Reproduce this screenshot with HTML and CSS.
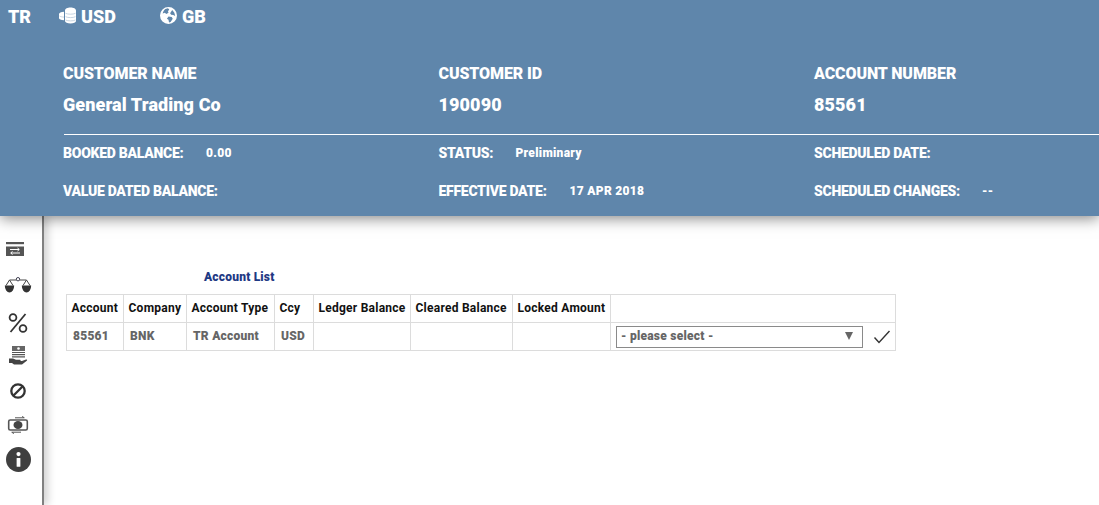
FILE: index.html
```html
<!DOCTYPE html>
<html lang="en">
<head>
<meta charset="utf-8">
<title>Account List</title>
<link rel="stylesheet" href="styles.css">
</head>
<body>
<header class="header">
  <div class="topbar">
    <span class="top-item top-lang">TR</span>
    <span class="top-item top-ccy">
      <svg class="top-icon" viewBox="0 0 17 16"><path fill="#fff" d="M6 3c0-1.700 2.500-3 5.500-3S17 1.300 17 3v10.500c0 1.500-2.500 2.500-5.500 2.500S6 15 6 13.500zM0 6.500C0 5.200 2 4.300 5 4.200v8.600c-3-.1-5-1-5-2.300z"/><path d="M6.500 5.800c2.500 1.200 7.500 1.200 10 0M6.500 9.200c2.500 1.200 7.500 1.200 10 0M6.500 12.500c2.500 1.200 7.500 1.200 10 0M.5 8.500c1 .7 2.700 1 4.500 1.100" fill="none" stroke="#b9cadb" stroke-width=".8"/></svg>
      USD
    </span>
    <span class="top-item top-country">
      <svg class="top-icon" viewBox="0 0 16 16"><path fill="#fff" fill-rule="evenodd" d="M8 0a8 8 0 1 0 0 16A8 8 0 0 0 8 0zM5 1.800l2.500-.6 1.200 1.100L7.500 4l.5 1.500-2 1-1.500-1L2.500 6C3 4 4 2.800 5 1.800zm6.500 1 2 2.500.8 3.200-1.800-1-2-.2-1-1.500zM8 9l3 .5 1 1.500-2 3-1.500.5-.5-2.500L6.500 11z"/></svg>
      GB
    </span>
  </div>
  <div class="primary">
    <div class="field">
      <div class="label">CUSTOMER NAME</div>
      <div class="value">General Trading Co</div>
    </div>
    <div class="field">
      <div class="label">CUSTOMER ID</div>
      <div class="value">190090</div>
    </div>
    <div class="field">
      <div class="label">ACCOUNT NUMBER</div>
      <div class="value">85561</div>
    </div>
  </div>
  <div class="secondary">
    <div class="pair"><span class="pair-label pl-booked">BOOKED BALANCE:</span><span class="pair-value">0.00</span></div>
    <div class="pair"><span class="pair-label pl-status">STATUS:</span><span class="pair-value">Preliminary</span></div>
    <div class="pair"><span class="pair-label">SCHEDULED DATE:</span></div>
    <div class="pair"><span class="pair-label">VALUE DATED BALANCE:</span></div>
    <div class="pair"><span class="pair-label pl-effective">EFFECTIVE DATE:</span><span class="pair-value">17 APR 2018</span></div>
    <div class="pair"><span class="pair-label pl-changes">SCHEDULED CHANGES:</span><span class="pair-value">--</span></div>
  </div>
</header>
<div class="body">
  <nav class="sidebar">
    <svg class="nav-icon ni-transfer" viewBox="0 0 20 16"><rect x="1" y="1" width="18" height="2.200" fill="#555"/><rect x="1" y="5.500" width="18" height="9.500" fill="#555"/><path d="M5 8.500h9M12.500 7l1.800 1.500-1.800 1.500M15 12H6M7.500 10.500 5.700 12l1.800 1.500" fill="none" stroke="#fff" stroke-width="1"/></svg>
    <svg class="nav-icon ni-scale" viewBox="0 0 28 16"><circle cx="14" cy="2.200" r="1.700" fill="none" stroke="#445" stroke-width="1"/><path d="M5.500 3h7M15.500 3h7M5.500 3 2 8.500M5.500 3 9 8.500M22.500 3 19 8.500M22.500 3 26 8.500" fill="none" stroke="#444" stroke-width="1"/><path d="M.8 8.500h9.400a4.700 7 0 0 1-9.400 0zM17.800 8.500h9.400a4.700 7 0 0 1-9.400 0z" fill="#333"/></svg>
    <svg class="nav-icon ni-percent" viewBox="0 0 22 22"><path d="M18.500 2 3.500 20" stroke="#333" stroke-width="1.800" fill="none"/><circle cx="6" cy="5.500" r="3.400" fill="none" stroke="#333" stroke-width="1.800"/><circle cx="16" cy="16.500" r="3.400" fill="none" stroke="#333" stroke-width="1.800"/></svg>
    <svg class="nav-icon ni-cash" viewBox="0 0 20 20"><rect x="4" y="1" width="13" height="5" fill="#666"/><circle cx="10.500" cy="3.500" r="1.300" fill="#fff"/><path d="M4 7.500h13M4 9.700h13M4 11.900h13" stroke="#555" stroke-width="1.200"/><path d="M1 13.500h4l3 1.200h4c1 0 1 1.300 0 1.300H9h5l4-1.500c1 0 1.500.5.800 1.200L14 19.500H6l-2-1.500H1z" fill="#444"/></svg>
    <svg class="nav-icon ni-block" viewBox="0 0 18 18"><circle cx="9" cy="9" r="6.700" fill="none" stroke="#333" stroke-width="2.300"/><path d="M4.500 13.500l9-9" stroke="#333" stroke-width="2.300"/></svg>
    <svg class="nav-icon ni-exchange" viewBox="0 0 22 18"><rect x="1.700" y="4" width="18.600" height="10" rx="1.500" fill="none" stroke="#555" stroke-width="1.600"/><ellipse cx="11" cy="9" rx="4.500" ry="4" fill="#444"/><path d="M8 1.800h9M15 .5l2.500 1.300M14 16.200H5M7 17.500l-2.500-1.300" stroke="#555" fill="none"/></svg>
    <svg class="nav-icon ni-info" viewBox="0 0 24 24"><circle cx="12" cy="12" r="12" fill="#3f3f3f"/><circle cx="12" cy="6.800" r="2" fill="#fff"/><rect x="10.200" y="10.500" width="3.600" height="8.500" rx=".6" fill="#fff"/></svg>
  </nav>
  <main class="content">
    <div class="title">Account List</div>
    <table class="grid">
      <thead>
        <tr>
          <th class="c1">Account</th>
          <th class="c2">Company</th>
          <th class="c3">Account Type</th>
          <th class="c4">Ccy</th>
          <th class="c5">Ledger Balance</th>
          <th class="c6">Cleared Balance</th>
          <th class="c7">Locked Amount</th>
          <th class="c8"></th>
        </tr>
      </thead>
      <tbody>
        <tr>
          <td>85561</td>
          <td>BNK</td>
          <td>TR Account</td>
          <td>USD</td>
          <td></td>
          <td></td>
          <td></td>
          <td class="action-cell">
            <div class="action">
              <div class="select"><span>- please select -</span><span class="arrow"></span></div>
              <svg class="check" viewBox="0 0 18 14"><path d="M1.500 7.500 6 12.500 16.500 1" fill="none" stroke="#333" stroke-width="1.400"/></svg>
            </div>
          </td>
        </tr>
      </tbody>
    </table>
  </main>
</div>
</body>
</html>
```
FILE: styles.css
```css
* { box-sizing: border-box; }
html, body { margin: 0; height: 100%; }
body {
  font-family: Roboto, "Liberation Sans", sans-serif;
  font-weight: 900;
  background: #fff;
  overflow: hidden;
  height: 505px;
}
.header {
  position: relative;
  z-index: 2;
  height: 216px;
  background: #5f86ab;
  color: #fff;
  box-shadow: 0 2px 14px rgba(0, 0, 0, .5);
}
.topbar {
  display: flex;
  align-items: center;
  height: 33px;
  font-size: 18px;
  padding-left: 8px;
}
.top-item { display: flex; align-items: center; }
.top-lang { width: 51px; }
.top-ccy { width: 101px; }
.top-icon { width: 17px; height: 17px; margin-right: 5px; margin-top: -3px; }
.primary {
  display: grid;
  grid-template-columns: 375.5px 375.5px 1fr;
  padding: 31px 0 0 63px;
  height: 101px;
}
.label {
  font-size: 16px;
  line-height: 20px;
  letter-spacing: -.1px;
}
.value {
  font-size: 18px;
  line-height: 20px;
  letter-spacing: .1px;
  margin-top: 11px;
}
.secondary {
  display: grid;
  grid-template-columns: 375.5px 375.5px 1fr;
  grid-auto-rows: 38px;
  padding: 0 0 0 63px;
  background: linear-gradient(#fff, #fff) 64px 0 / 100% 1px no-repeat;
}
.pair {
  display: flex;
  align-items: center;
  height: 38px;
}
.pair-label {
  font-size: 14px;
  letter-spacing: -.27px;
}
.pl-booked { width: 143px; }
.pl-status { width: 77px; }
.pl-effective { width: 131px; }
.pl-changes { width: 168px; }
.pair-value { font-size: 12px; letter-spacing: .3px; }
.body { display: flex; height: 289px; }
.sidebar {
  width: 44px;
  flex: none;
  border-right: 2px solid #808080;
  box-shadow: 4px 0 8px rgba(0, 0, 0, .18);
  display: flex;
  flex-direction: column;
  align-items: center;
  padding: 25px 6px 0 0;
}
.nav-icon { display: block; flex: none; }
.ni-transfer { width: 20px; height: 16px; margin-right: 6px; }
.ni-scale { width: 28px; height: 16px; margin-top: 20px; }
.ni-percent { width: 22px; height: 22px; margin-top: 19px; }
.ni-cash { width: 20px; height: 20px; margin-top: 11px; }
.ni-block { width: 18px; height: 18px; margin-top: 17px; }
.ni-exchange { width: 22px; height: 18px; margin-top: 16px; }
.ni-info { width: 25px; height: 25px; margin-top: 13px; }
.content { flex: 1; padding: 53px 0 0 22px; }
.title {
  font-size: 12px;
  line-height: 16px;
  color: #1f3a84;
  padding-left: 138px;
  letter-spacing: .2px;
}
.grid {
  border-collapse: collapse;
  table-layout: fixed;
  width: 830px;
  margin-top: 9px;
  font-size: 12px;
  letter-spacing: .25px;
}
.grid th, .grid td {
  border: 1px solid #dcdcdc;
  height: 28px;
  padding: 0 0 2px 4.500px;
  text-align: left;
  white-space: nowrap;
  overflow: hidden;
}
.grid th { color: #111; }
.grid td { color: #666; padding-left: 6px; }
.c1 { width: 57px; }
.c2 { width: 63px; }
.c3 { width: 88px; }
.c4 { width: 39px; }
.c5 { width: 97px; }
.c6 { width: 102px; }
.c7 { width: 98px; }
.grid td.action-cell { padding: 0 0 0 5px; }
.action { display: flex; align-items: center; }
.select {
  width: 247px;
  height: 22px;
  border: 1px solid #8a8a8a;
  display: flex;
  align-items: center;
  justify-content: space-between;
  padding: 0 4px 1px;
  color: #666;
}
.arrow {
  width: 0;
  height: 0;
  border-left: 4px solid transparent;
  border-right: 4px solid transparent;
  border-top: 8px solid #666;
  margin-right: 5px;
}
.check { width: 18px; height: 14px; margin-left: 10px; }
```
